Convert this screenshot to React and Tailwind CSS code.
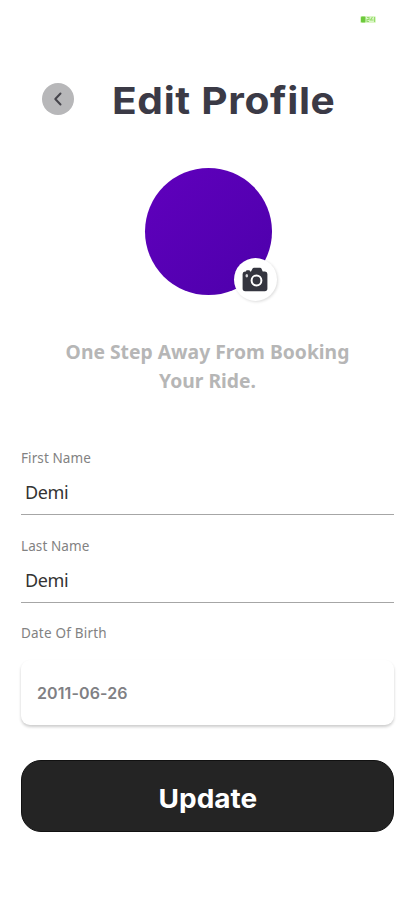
import { useState } from "react";

function BatteryIcon() {
  return (
    <svg width="16" height="7" viewBox="0 0 16 7" aria-hidden="true">
      <rect x="0" y="0" width="16" height="7" rx="1.5" fill="#dcf6c8" />
      <rect x="1" y="0.5" width="4.5" height="6" rx="1" fill="#6cc93c" />
      <path d="M7 1.5h2v2H7v2h2M12.5 1l-2 3h3M14.5 1v5" fill="none" stroke="#95dc6c" strokeWidth="1.1" />
    </svg>
  );
}

function BackIcon() {
  return (
    <svg width="10" height="14" viewBox="0 0 10 14" aria-hidden="true">
      <path d="M7.5 1.5 2.300 7l5.200 5.500" fill="none" stroke="#45444b" strokeWidth="2" strokeLinecap="round" strokeLinejoin="round" />
    </svg>
  );
}

function CameraIcon() {
  return (
    <svg width="26" height="25" viewBox="0 0 26 25" aria-hidden="true">
      <path
        d="M3 4.500h1q0-1.200 1-1.200h2q1 0 1 1.200h1l1.600-3Q11 .700 12 .700h6q1 0 1.400.800l1.300 3H23Q25.400 4.500 25.400 7v14.500Q25.400 24.200 22.800 24.200H3.200Q.600 24.200.600 21.500V7Q.600 4.500 3 4.500Z"
        fill="#34353f"
      />
      <circle cx="14.500" cy="13.500" r="4.900" fill="none" stroke="#fff" strokeWidth="2" />
      <ellipse cx="4.800" cy="8.700" rx="1.300" ry="1.800" fill="#d4d4d8" />
    </svg>
  );
}

function TextField({ label, value, onChange }) {
  return (
    <label className="block h-[87.5px]">
      <span className="block h-5 pt-px text-[13.5px]/5 tracking-[0.1px] text-[#828282]">{label}</span>
      <input
        className="block h-[48px] w-full border-b border-[#a6a6a6] pt-[3px] pl-1 text-[18px] tracking-[-0.4px] text-[#333] outline-none"
        value={value}
        onChange={(e) => onChange(e.target.value)}
      />
    </label>
  );
}

export default function App() {
  const [firstName, setFirstName] = useState("Demi");
  const [lastName, setLastName] = useState("Demi");

  return (
    <div className="flex h-[900px] w-[415px] flex-col overflow-hidden bg-white font-['Noto_Sans',sans-serif]">
      <div className="flex h-[76px] justify-end pt-4 pr-[39px]">
        <BatteryIcon />
      </div>

      <header className="flex h-[50px] items-center pl-[42px]">
        <button className="-mt-1 flex size-8 items-center justify-center rounded-full bg-[#b7b7b9]" aria-label="Back">
          <BackIcon />
        </button>
        <h1 className="ml-[38px] origin-left scale-x-[1.085] pt-px font-['Inter',sans-serif] text-[37.5px] font-bold tracking-[0.6px] whitespace-nowrap text-[#3b3a46]">
          Edit Profile
        </h1>
      </header>

      <div className="relative mt-[41.5px] ml-[144.5px] size-[127px] shrink-0 rounded-full bg-linear-to-br from-[#6000bd] to-[#4d00ab]">
        <button
          className="absolute top-[90px] left-[89px] flex size-[43px] items-center justify-center rounded-full bg-white shadow-[1px_1px_3px_rgba(0,0,0,0.14)]"
          aria-label="Change photo"
        >
          <CameraIcon />
        </button>
      </div>

      <p className="mt-[42.5px] h-[58px] scale-x-[0.965] text-center text-[20px]/[29px] font-bold text-[#b6b6b6]">
        One Step Away From Booking
        <br />
        Your Ride.
      </p>

      <form className="mt-[52px] flex flex-col px-[21px]" onSubmit={(e) => e.preventDefault()}>
        <TextField label="First Name" value={firstName} onChange={setFirstName} />
        <TextField label="Last Name" value={lastName} onChange={setLastName} />
        <span className="h-5 pt-px text-[13.5px]/5 tracking-[0.2px] text-[#828282]">Date Of Birth</span>
        <div className="mt-[18px] flex h-[65px] items-center rounded-[9px] bg-white pt-px pl-4 font-['Inter',sans-serif] text-[16px] font-semibold tracking-[0.1px] text-[#808084] shadow-[0_2px_3px_rgba(0,0,0,0.2)]">
          2011-06-26
        </div>
        <button className="mt-[35px] h-[72px] rounded-[20px] border border-[#111] bg-[#242424] pt-1 font-['Inter',sans-serif] text-[26px] font-bold text-white">
          <span className="inline-block scale-x-[1.075]">Update</span>
        </button>
      </form>
    </div>
  );
}
